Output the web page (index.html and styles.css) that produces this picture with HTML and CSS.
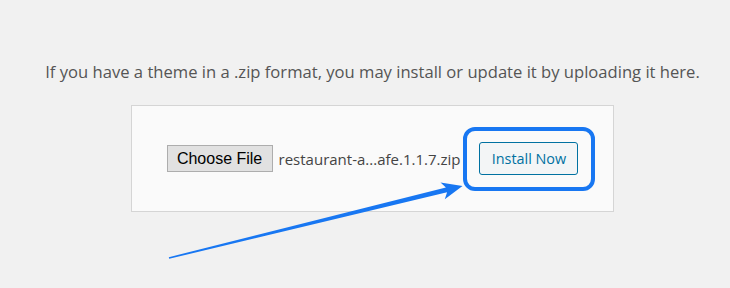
FILE: index.html
```html
<!DOCTYPE html>
<html>
  <head>
    <title>Upload Theme</title>
    <meta name="viewport" content="width=device-width, initial-scale=1">
    <link rel="stylesheet" href="styles.css">
  </head>
  <body>
  <div class="page">
    <p class="install-help">If you have a theme in a .zip format, you may install or update it by uploading it here.</p>
    <div class="upload-box">
      <button class="choose-btn">Choose File</button>
      <span class="file-name">restaurant-a...afe.1.1.7.zip</span>
      <span class="highlight">
        <button class="install-btn">Install Now</button>
      </span>
    </div>
  </div>
  <svg class="arrow" width="730" height="288" viewBox="0 0 730 288">
    <polygon points="168.8,257.2 445.9,187.4 440.5,182.5 462.5,186 444.8,199.2 447.1,192.2 169.2,258.8" fill="#1877f2"/>
  </svg>
  </body>
</html>
```

FILE: styles.css
```css
* {
  box-sizing: border-box;
}
html, body {
  margin: 0;
  padding: 0;
  background-color: #f1f1f1;
  height: 288px;
  overflow: hidden;
}
body {
  position: relative;
  font-family: "Open Sans", sans-serif;
}
.page {
  padding-left: 15px;
  padding-top: 59px;
}
.install-help {
  margin: 0;
  text-align: center;
  font-size: 16.6px;
  line-height: 26px;
  color: #555;
}
.upload-box {
  width: 483px;
  height: 107px;
  margin: 20px auto 0;
  border: 1px solid #d5d5d5;
  background-color: #fafafa;
  display: flex;
  align-items: center;
  justify-content: center;
}
.choose-btn {
  font-family: "Liberation Sans", Arial, sans-serif;
  font-size: 16px;
  color: #000;
  background-color: #e1e1e1;
  border: 1px solid #adadad;
  border-radius: 0;
  height: 27px;
  width: 106px;
  padding: 0;
}
.file-name {
  font-size: 15px;
  color: #444;
  margin-left: 6px;
  margin-right: 19px;
}
.highlight {
  position: relative;
  display: inline-block;
}
.highlight::after {
  content: "";
  position: absolute;
  left: -16px;
  right: -17px;
  top: -15px;
  bottom: -16px;
  border: 4px solid #1877f2;
  border-radius: 12px;
}
.install-btn {
  display: block;
  font-family: "Open Sans", sans-serif;
  font-size: 14.4px;
  color: #0071a1;
  background-color: #f3f5f6;
  border: 1px solid #0071a1;
  border-radius: 3px;
  width: 99px;
  height: 33px;
  padding: 0;
}
.arrow {
  position: absolute;
  left: 0;
  top: 0;
}
```
